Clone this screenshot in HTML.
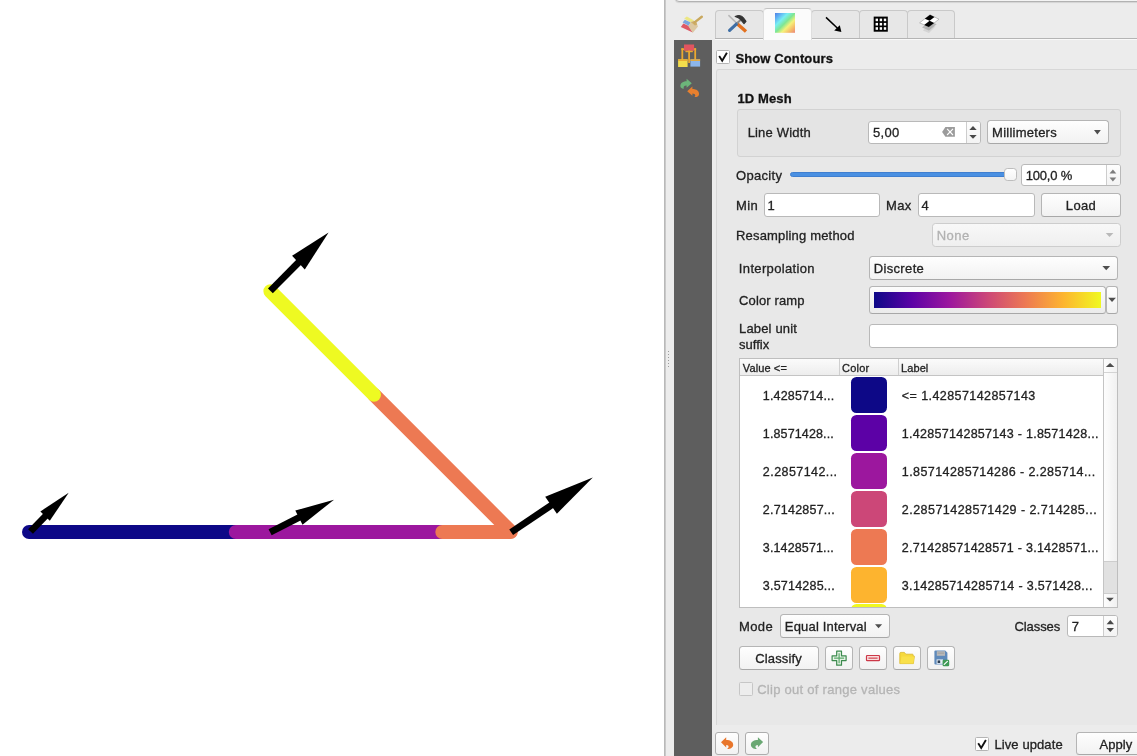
<!DOCTYPE html>
<html lang="en">
<head>
<meta charset="utf-8">
<title>Mesh Layer Styling</title>
<style>
*{box-sizing:border-box;margin:0;padding:0}
html,body{width:1137px;height:756px;overflow:hidden;background:#ececec}
body{position:relative;font-family:"Liberation Sans",sans-serif;font-size:13px;color:#222}
.abs,.t,.tab,.gb,.inp,.btn,.cb,.sw,svg.i{position:absolute}
.t{white-space:nowrap;line-height:16px;height:16px;-webkit-text-stroke:0.3px currentColor}
#canvas{left:0;top:0;width:664px;height:756px;background:#fff}
#split{left:664px;top:0;width:2px;height:756px;background:linear-gradient(90deg,#b9b9b9 0,#b9b9b9 55%,#dedede 100%)}
#side{left:674px;top:40px;width:38px;height:716px;background:#5e5e5e}
#topline{left:674.5px;top:-20px;width:480px;height:21.9px;background:#f4f4f4;border:1px solid #b2b2b2;border-radius:4px;box-shadow:0 0.5px 1px rgba(0,0,0,.10)}
.tab{top:10px;height:29px;background:#e7e7e7;border:1px solid #c9c9c9;border-bottom:none;border-radius:4px 4px 0 0}
.tab.on{top:8px;height:32px;background:#fbfbfb;border-color:#c3c3c3 #dedede #dedede #dedede;z-index:2}
#tabline{left:715px;top:37.9px;width:422px;height:2.3px;background:linear-gradient(#b4b4b4 0,#b4b4b4 42%,#f9f9f9 44%,#f9f9f9 100%)}
.gb{background:#e8e8e8;border:1px solid #d7d7d7;border-radius:3px}
.inp{background:#fff;border:1px solid #b9b9b9;border-radius:3px}
.btn{background:linear-gradient(#fefefe,#f2f2f2);border:1px solid #b5b5b5;border-bottom-color:#a8a8a8;border-radius:3.5px}
.btn.off{background:linear-gradient(#f8f8f8,#efefef);border-color:#cdcdcd}
.cb{background:#fff;border:1px solid #b4b4b4;border-radius:1.5px}
.sw{left:851px;width:36px;height:36px;border-radius:5.5px}
.div{position:absolute;width:1px;background:#cdcdcd}
</style>
</head>
<body>
<!-- MAP CANVAS -->
<div id="canvas" class="abs">
<svg width="664" height="756" viewBox="0 0 664 756">
  <g fill="none" stroke-linecap="round" stroke-width="14">
    <line x1="29" y1="532" x2="235.8" y2="532" stroke="#0d0887"/>
    <line x1="235.8" y1="532" x2="442.3" y2="532" stroke="#9c179e"/>
    <line x1="442.3" y1="532" x2="510.7" y2="532" stroke="#ed7953"/>
    <line x1="510.7" y1="531.5" x2="374" y2="394.8" stroke="#ed7953"/>
    <line x1="374" y1="394.8" x2="270.4" y2="291.2" stroke="#eefa22"/>
  </g>
  <g fill="#000" stroke="#000" stroke-width="6.8">
    <line x1="30.5" y1="531.5" x2="46" y2="515.5"/>
    <polygon points="68.7,492.7 40.4,511.4 49.8,520.8" stroke="none"/>
    <line x1="270.1" y1="532.2" x2="300" y2="517"/>
    <polygon points="334,499.7 295.3,510.6 302.5,524.7" stroke="none"/>
    <line x1="270.4" y1="290.9" x2="299" y2="262"/>
    <polygon points="328.6,232.4 292.1,255.7 304.8,269.5" stroke="none"/>
    <line x1="511.2" y1="532.2" x2="552" y2="504.8"/>
    <polygon points="592.8,477.5 545.2,496.7 556.9,513.7" stroke="none"/>
  </g>
</svg>
</div>
<div id="split" class="abs"></div>
<div id="side" class="abs"></div>
<div id="topline" class="abs"></div>

<!-- TABS -->
<div id="tabline" class="abs" style="z-index:1"></div>
<div class="tab" style="left:715px;width:49px"></div>
<div class="tab" style="left:811px;width:49px"></div>
<div class="tab" style="left:859px;width:49px"></div>
<div class="tab" style="left:907px;width:48px"></div>
<div class="tab on" style="left:763px;width:49px"></div>

<!-- PANEL BOXES -->
<div class="gb" style="left:716px;top:69px;width:440px;height:656px;border-radius:3px 0 0 0;border-bottom:none"></div>
<div class="gb" style="left:737px;top:109px;width:384px;height:48px;background:#e4e4e4;border-color:#d2d2d2"></div>
<div class="cb" style="left:716px;top:50px;width:14px;height:14px"></div>

<!-- line width spin + unit combo -->
<div class="inp" style="left:868px;top:121px;width:113px;height:23px"></div>
<div class="abs" style="left:967px;top:122px;width:13px;height:21px;background:linear-gradient(#fdfdfd,#f3f3f3);border-radius:0 2px 2px 0"></div>
<div class="div" style="left:966px;top:122px;height:21px"></div>
<div class="btn" style="left:987px;top:120px;width:122px;height:24px"></div>
<!-- opacity -->
<div class="abs" style="left:790px;top:172px;width:222px;height:5px;border-radius:2.5px;background:#4a90e2;border:1px solid #3f7fd0"></div>
<div class="abs" style="left:1004px;top:168px;width:13px;height:13px;border-radius:3.5px;background:linear-gradient(#fff,#f4f4f4);border:1px solid #bdbdbd"></div>
<div class="inp" style="left:1021px;top:164px;width:100px;height:22px"></div>
<div class="abs" style="left:1107px;top:165px;width:13px;height:20px;background:linear-gradient(#fdfdfd,#f3f3f3);border-radius:0 2px 2px 0"></div>
<div class="div" style="left:1106px;top:165px;height:20px"></div>
<!-- min / max / load -->
<div class="inp" style="left:764px;top:193px;width:116px;height:24px"></div>
<div class="inp" style="left:918px;top:193px;width:117px;height:24px"></div>
<div class="btn" style="left:1041px;top:193px;width:80px;height:24px"></div>
<!-- resampling (disabled) -->
<div class="btn off" style="left:932px;top:223px;width:189px;height:24px"></div>
<!-- interpolation -->
<div class="btn" style="left:869px;top:256px;width:249px;height:24px"></div>
<!-- color ramp -->
<div class="btn" style="left:869px;top:286px;width:237px;height:28px;background:linear-gradient(#fcfcfc,#ebebeb)"></div>
<div class="abs" style="left:874px;top:292px;width:227px;height:16px;background:linear-gradient(90deg,#0d0887 0%,#5c01a6 16.7%,#9c179e 33.3%,#cc4778 50%,#ed7953 66.7%,#fdb42f 83.3%,#f0f921 100%)"></div>
<div class="btn" style="left:1106px;top:286px;width:12px;height:28px;border-radius:3px"></div>
<!-- label unit suffix -->
<div class="inp" style="left:869px;top:324px;width:249px;height:24px"></div>

<!-- TABLE -->
<div class="abs" style="left:739px;top:358px;width:379px;height:250px;background:#fff;border:1px solid #bebebe;overflow:hidden">
  <div class="abs" style="left:0;top:0;width:364px;height:17px;background:linear-gradient(#fbfbfb,#ededed);border-bottom:1px solid #c4c4c4"></div>
  <div class="div" style="left:99px;top:0;height:16px;background:#cfcfcf"></div>
  <div class="div" style="left:158px;top:0;height:16px;background:#cfcfcf"></div>
  <div class="abs" style="left:363px;top:0;width:15px;height:248px;background:linear-gradient(90deg,#fdfdfd,#f0f0f0);border-left:1px solid #c4c4c4"></div>
  <div class="abs" style="left:364px;top:13px;width:14px;height:1px;background:#d3d3d3"></div>
  <div class="abs" style="left:364px;top:202px;width:14px;height:33px;background:#e1e1e1;border-top:1px solid #cdcdcd;border-bottom:1px solid #cdcdcd"></div>
</div>
<div class="sw" style="top:377px;background:#0d0887"></div>
<div class="sw" style="top:415px;background:#5c01a6"></div>
<div class="sw" style="top:453px;background:#9c179e"></div>
<div class="sw" style="top:491px;background:#cc4778"></div>
<div class="sw" style="top:529px;background:#ed7953"></div>
<div class="sw" style="top:567px;background:#fdb42f"></div>
<div class="abs" style="left:851px;top:604px;width:36px;height:3px;overflow:hidden"><div class="sw" style="left:0;top:0;background:#f0f921"></div></div>

<!-- mode / classes -->
<div class="btn" style="left:780px;top:614px;width:110px;height:24px"></div>
<div class="inp" style="left:1067px;top:615px;width:51px;height:22px"></div>
<div class="abs" style="left:1104px;top:616px;width:13px;height:20px;background:linear-gradient(#fdfdfd,#f3f3f3);border-radius:0 2px 2px 0"></div>
<div class="div" style="left:1103px;top:616px;height:20px"></div>
<!-- buttons row -->
<div class="btn" style="left:739px;top:646px;width:80px;height:24px"></div>
<div class="btn" style="left:825px;top:646px;width:28px;height:24px"></div>
<div class="btn" style="left:859px;top:646px;width:28px;height:24px"></div>
<div class="btn" style="left:893px;top:646px;width:28px;height:24px"></div>
<div class="btn" style="left:927px;top:646px;width:28px;height:24px"></div>
<div class="cb" style="left:739px;top:682px;width:14px;height:14px;background:#ededed;border-color:#c6c6c6"></div>
<!-- bottom bar -->
<div class="btn" style="left:715px;top:732px;width:24px;height:23px;border-color:#adadad;border-radius:3px"></div>
<div class="btn" style="left:745px;top:732px;width:24px;height:23px;border-color:#adadad;border-radius:3px"></div>
<div class="cb" style="left:975px;top:737px;width:14px;height:14px"></div>
<div class="btn" style="left:1076px;top:732px;width:80px;height:23px"></div>
<svg class="i" style="left:0;top:0;z-index:5" width="1137" height="756" viewBox="0 0 1137 756">
<defs>
  <linearGradient id="rb" x1="0" y1="0" x2="1" y2="1">
    <stop offset="0" stop-color="#5080e4"/><stop offset="0.17" stop-color="#62b4f4"/><stop offset="0.33" stop-color="#78eef2"/>
    <stop offset="0.5" stop-color="#7ee694"/><stop offset="0.66" stop-color="#f4f27a"/><stop offset="0.84" stop-color="#f6b868"/><stop offset="1" stop-color="#ea887c"/>
  </linearGradient>
</defs>
<!-- splitter dots -->
<g fill="#9c9c9c"><rect x="668" y="351" width="1" height="1"/><rect x="668" y="354" width="1" height="1"/><rect x="668" y="357" width="1" height="1"/><rect x="668" y="360" width="1" height="1"/><rect x="668" y="363" width="1" height="1"/><rect x="668" y="366" width="1" height="1"/></g>

<!-- paintbrush (symbology) icon -->
<g id="ic-brush">
  <polygon points="684.2,18.6 686.8,16.6 694.2,20.6 690.4,22.6" fill="#ece66a" opacity="0.8"/>
  <polygon points="682.6,22.6 684.8,19.8 690.8,22.4 688.6,25.8" fill="#7aa6de"/>
  <polygon points="680.8,27 683.4,23.4 688.8,26 692.8,32.6" fill="#de5a66"/>
  <polygon points="688.4,26.2 690.8,22 695.6,20.8 698,26.6 692.8,32.8" fill="#dcc8a2"/>
  <polygon points="690.8,22 695.6,20.8 697.2,24.6 695,25.6" fill="#cfae68"/>
  <line x1="694.6" y1="22.4" x2="701.8" y2="16.8" stroke="#c9a85e" stroke-width="2.4" stroke-linecap="round"/>
</g>

<!-- tools icon -->
<g id="ic-tools" stroke-linecap="round">
  <line x1="728.9" y1="15.6" x2="736.4" y2="22.8" stroke="#b9b9b9" stroke-width="1.6"/>
  <line x1="736.6" y1="23.2" x2="746" y2="31.6" stroke="#e2701e" stroke-width="3.4" stroke-linecap="butt"/>
  <line x1="729.6" y1="30.4" x2="736.6" y2="23.8" stroke="#3f6fa6" stroke-width="3.2"/>
  <line x1="737.5" y1="22.8" x2="741.5" y2="19.2" stroke="#8c8c8c" stroke-width="2"/>
  <path d="M735.2,16.6 C738.6,14.8 741.8,15.6 743.6,18 L746,21.4 L744,23.6 L740,19 C738.6,17.6 737,17.2 735.2,16.6 Z" fill="#333" stroke="#333" stroke-width="1.1" stroke-linejoin="round"/>
</g>

<!-- rainbow icon -->
<rect x="775" y="13" width="20" height="19.8" fill="url(#rb)"/>

<!-- arrow icon -->
<line x1="826" y1="17.4" x2="837.5" y2="28.3" stroke="#000" stroke-width="1.5"/>
<polygon points="841.4,32.1 834.2,30.6 839.8,25.2" fill="#000"/>

<!-- grid icon -->
<rect x="873.7" y="16.6" width="14.1" height="15.1" fill="#000"/>
<g fill="#fff">
  <rect x="875.6" y="18.6" width="2.4" height="2.6"/><rect x="879.7" y="18.6" width="2.4" height="2.6"/><rect x="883.8" y="18.6" width="2.4" height="2.6"/>
  <rect x="875.6" y="22.9" width="2.4" height="2.6"/><rect x="879.7" y="22.9" width="2.4" height="2.6"/><rect x="883.8" y="22.9" width="2.4" height="2.6"/>
  <rect x="875.6" y="27.2" width="2.4" height="2.6"/><rect x="879.7" y="27.2" width="2.4" height="2.6"/><rect x="883.8" y="27.2" width="2.4" height="2.6"/>
</g>

<!-- layers icon -->
<g id="ic-layers">
  <polygon points="929.6,24 935.4,26.6 929,33 923,30.4" fill="#c4c4c4" opacity="0.55"/>
  <polygon points="929.6,21 936.6,24.2 929,30.6 922,27.6" fill="#9a9a9a" opacity="0.6"/>
  <polygon points="930,14.8 939,19.2 928.8,27 919.6,22.8" fill="#fff" stroke="#888" stroke-width="0.5"/>
  <polygon points="930,14.8 934.5,17 929.6,20.8 924.8,18.8" fill="#000"/>
  <polygon points="929.6,20.8 934.2,23 928.8,27 924.2,24.9" fill="#000"/>
</g>

<!-- sidebar icon 1: style tree -->
<g id="ic-tree">
  <g stroke="#eaa830" stroke-width="1.8" fill="none">
    <line x1="682.3" y1="48.2" x2="682.3" y2="60"/><line x1="689.1" y1="50" x2="689.1" y2="63"/><line x1="695.2" y1="48.2" x2="695.2" y2="60"/>
    <line x1="681.4" y1="49.2" x2="696.1" y2="49.2"/>
  </g>
  <rect x="684" y="44.5" width="10.1" height="6.2" fill="#e2555f"/>
  <rect x="685.4" y="50.7" width="7.4" height="1.5" fill="#eaa830"/>
  <rect x="678.1" y="59.3" width="9.5" height="7.7" fill="#f4de4c"/>
  <rect x="678.1" y="59.3" width="9.5" height="1.6" fill="#eaa830"/>
  <rect x="690.4" y="59.3" width="9.7" height="7.3" fill="#8cb6ec"/>
  <rect x="690.4" y="59.3" width="9.7" height="1.6" fill="#eaa830"/>
</g>


<!-- sidebar icon 2: history arrows -->
<g id="ic-hist">
  <path d="M691.8,83.2 L686.6,78.8 L686.6,81.2 C682.5,81.2 680,83.6 680.4,86.6 C680.8,88.4 682.6,89 684,88.6 C683,87 684,85.4 686.6,85.4 L686.6,87.8 Z" fill="#6cb57a"/>
  <path d="M687.2,91.2 L692.4,86.6 L692.4,89 C696.6,89 699.4,91.2 699,94.4 C698.6,96.6 696.4,97.4 694.4,97 C696,95.6 695.4,93.6 692.4,93.4 L692.4,95.8 Z" fill="#e8802e"/>
</g>

<!-- checkmarks -->
<g fill="none" stroke="#111" stroke-width="1.9" stroke-linecap="butt" stroke-linejoin="miter">
  <polyline points="719.2,56.1 722.2,60.7 726.9,52.8"/>
  <polyline points="978.2,743.3 981.2,747.9 985.9,740"/>
</g>

<!-- clear icon in spin box -->
<polygon points="942.1,132 945.4,127.1 954.9,127.1 954.9,136.7 945.4,136.7" fill="#9b9b9b"/>
<g stroke="#fff" stroke-width="1.1"><line x1="947.1" y1="128.9" x2="953" y2="135"/><line x1="953" y1="128.9" x2="947.1" y2="135"/></g>

<!-- spin arrows -->
<g fill="#484848">
  <polygon points="969.3,130 976.7,130 973,126.1"/><polygon points="969.3,135 976.7,135 973,138.8"/>
  <polygon points="1106.6,624.2 1114,624.2 1110.3,620"/><polygon points="1106.6,628 1114,628 1110.3,632"/>
</g>
<g fill="#7d7d7d">
  <polygon points="1109.5,173.4 1116.3,173.4 1112.9,169.4"/><polygon points="1109.5,177.4 1116.3,177.4 1112.9,181.4"/>
</g>
<!-- combo arrows -->
<g fill="#4e4e4e">
  <polygon points="1094,130.1 1100.8,130.1 1097.4,134.4"/>
  <polygon points="1102.4,265.9 1110.1,265.9 1106.25,270.2"/>
  <polygon points="1108.2,297.8 1115.9,297.8 1112.05,302.1"/>
  <polygon points="875,624.2 882.1,624.2 878.55,628.2"/>
  <polygon points="1105.8,367 1114.4,367 1110.1,363.1"/>
  <polygon points="1106.2,597.7 1113.8,597.7 1110,601.6"/>
</g>
<polygon points="1105.7,233 1113.4,233 1109.55,237" fill="#b9b9b9"/>

<!-- + icon -->
<path d="M836.7,651.2 h4.8 v4.6 h4.6 v4.8 h-4.6 v4.6 h-4.8 v-4.6 h-4.6 v-4.8 h4.6 Z" fill="#e6f4e6" stroke="#3c8a4e" stroke-width="1.2" stroke-linejoin="round"/>
<path d="M838.5,653.2 h1.2 v4.4 h4.4 v1.2 h-4.4 v4.4 h-1.2 v-4.4 h-4.4 v-1.2 h4.4 Z" fill="#5aa86a"/>
<!-- - icon -->
<rect x="866.5" y="655.5" width="13" height="5.2" rx="0.8" fill="#f9dede" stroke="#cc3848" stroke-width="1.2"/>
<rect x="868.4" y="657.5" width="9.2" height="1.3" fill="#d8505c"/>
<!-- folder icon -->
<path d="M899.8,663.6 L899.8,653.4 Q899.8,652.4 900.8,652.4 L904.4,652.4 L905.8,654.2 L912.4,654.2 Q913.2,654.2 913.2,655 L913.2,656.2 L914.4,656.2 L913.4,663.6 Z" fill="#f6d93c" stroke="#d9b72c" stroke-width="0.8" stroke-linejoin="round"/>
<path d="M900.2,663.4 L901.6,656.4 L914.3,656.4 L913.3,663.4 Z" fill="#f9e04a"/>
<!-- save icon -->
<path d="M935.4,650.6 h9.8 l2.2,2.2 v10.8 q0,1 -1,1 h-11 q-1,0 -1,-1 v-12 q0,-1 1,-1 Z" fill="#5f8abb"/>
<rect x="936.8" y="651.2" width="8.2" height="4.6" fill="#b9b9b9"/>
<rect x="937.6" y="652.6" width="6.6" height="1" fill="#9e9e9e"/>
<rect x="936.6" y="659.4" width="6.4" height="4.4" fill="#e8eef5"/>
<rect x="937.6" y="660.4" width="2.6" height="2.6" fill="#2c3e55"/>
<rect x="942.6" y="659.8" width="6.6" height="6.4" rx="1.2" fill="#3f9a56"/>
<line x1="944.2" y1="664.4" x2="947.4" y2="661.4" stroke="#fff" stroke-width="1.2" stroke-linecap="round"/>

<!-- undo / redo -->
<path d="M721,742.3 L726.2,737.3 L726.2,740 C730.6,740 733.4,742 733.2,745 C733,747.6 730.2,749.2 727,749 C729,748 729.6,745.2 726.2,745 L726.2,747.4 Z" fill="#e8762c"/>
<path d="M763.1,742.1 L757.9,737.3 L757.9,740 C753.5,740 750.7,742 750.9,745 C751.1,747.6 753.9,749.2 757.1,749 C755.1,748 754.5,745.2 757.9,745 L757.9,747.2 Z" fill="#6aa873"/>
</svg>


<!-- TEXT -->
<div id="txt" style="position:absolute;left:0;top:0;width:1137px;height:756px;will-change:transform;z-index:6">
<div class="t" id="t1" style="left:735.43px;top:51.10px;font-size:13px;color:#111;letter-spacing:0.118px;font-weight:bold">Show Contours</div>
<div class="t" id="t2" style="left:737.43px;top:91.20px;font-size:13px;color:#111;letter-spacing:0.119px;font-weight:bold">1D Mesh</div>
<div class="t" id="t3" style="left:747.67px;top:125.00px;font-size:13px;color:#222;letter-spacing:0.174px">Line Width</div>
<div class="t" id="t4" style="left:873.05px;top:125.30px;font-size:13px;color:#222;letter-spacing:0.289px">5,00</div>
<div class="t" id="t5" style="left:992.05px;top:125.10px;font-size:13px;color:#222;letter-spacing:0.254px">Millimeters</div>
<div class="t" id="t6" style="left:736.05px;top:168.10px;font-size:13px;color:#222;letter-spacing:0.295px">Opacity</div>
<div class="t" id="t7" style="left:1025.67px;top:168.30px;font-size:13px;color:#222;letter-spacing:-0.182px">100,0 %</div>
<div class="t" id="t8" style="left:736.05px;top:198.40px;font-size:13px;color:#222;letter-spacing:0.398px">Min</div>
<div class="t" id="t9" style="left:767.43px;top:198.40px;font-size:13px;color:#222">1</div>
<div class="t" id="t10" style="left:886.05px;top:198.40px;font-size:13px;color:#222;letter-spacing:0.309px">Max</div>
<div class="t" id="t11" style="left:921.62px;top:198.40px;font-size:13px;color:#222">4</div>
<div class="t" id="t12" style="left:1065.86px;top:198.30px;font-size:13px;color:#222;letter-spacing:0.339px">Load</div>
<div class="t" id="t13" style="left:736.05px;top:228.10px;font-size:13px;color:#222;letter-spacing:0.172px">Resampling method</div>
<div class="t" id="t14" style="left:936.67px;top:228.10px;font-size:13px;color:#b1b1b1;letter-spacing:0.494px">None</div>
<div class="t" id="t15" style="left:738.86px;top:260.80px;font-size:13px;color:#222;letter-spacing:0.348px">Interpolation</div>
<div class="t" id="t16" style="left:873.67px;top:260.80px;font-size:13px;color:#222;letter-spacing:0.356px">Discrete</div>
<div class="t" id="t17" style="left:739.05px;top:293.30px;font-size:13px;color:#222;letter-spacing:0.125px">Color ramp</div>
<div class="t" id="t18" style="left:739.05px;top:321.00px;font-size:13px;color:#222;letter-spacing:0.162px">Label unit</div>
<div class="t" id="t19" style="left:739.05px;top:336.80px;font-size:13px;color:#222">suffix</div>
<div class="t" id="h1" style="left:742.76px;top:359.89px;font-size:11px;color:#222;letter-spacing:0.122px">Value &lt;=</div>
<div class="t" id="h2" style="left:842.05px;top:359.89px;font-size:11px;color:#222;letter-spacing:0.234px">Color</div>
<div class="t" id="h3" style="left:901.05px;top:359.89px;font-size:11px;color:#222;letter-spacing:0.078px">Label</div>
<div class="t" id="v0" style="left:762.86px;top:388.07px;font-size:12.5px;color:#222;letter-spacing:0.169px">1.4285714...</div>
<div class="t" id="l0" style="left:901.86px;top:388.07px;font-size:12.5px;color:#222;letter-spacing:0.422px">&lt;= 1.42857142857143</div>
<div class="t" id="v1" style="left:762.86px;top:426.07px;font-size:12.5px;color:#222;letter-spacing:0.129px">1.8571428...</div>
<div class="t" id="l1" style="left:901.86px;top:426.07px;font-size:12.5px;color:#222;letter-spacing:0.273px">1.42857142857143 - 1.8571428...</div>
<div class="t" id="v2" style="left:762.86px;top:464.07px;font-size:12.5px;color:#222;letter-spacing:0.424px">2.2857142...</div>
<div class="t" id="l2" style="left:901.86px;top:464.07px;font-size:12.5px;color:#222;letter-spacing:0.410px">1.85714285714286 - 2.285714...</div>
<div class="t" id="v3" style="left:762.86px;top:502.07px;font-size:12.5px;color:#222;letter-spacing:0.208px">2.7142857...</div>
<div class="t" id="l3" style="left:901.86px;top:502.07px;font-size:12.5px;color:#222;letter-spacing:0.460px">2.28571428571429 - 2.714285...</div>
<div class="t" id="v4" style="left:762.86px;top:540.07px;font-size:12.5px;color:#222;letter-spacing:0.129px">3.1428571...</div>
<div class="t" id="l4" style="left:901.86px;top:540.07px;font-size:12.5px;color:#222;letter-spacing:0.273px">2.71428571428571 - 3.1428571...</div>
<div class="t" id="v5" style="left:762.86px;top:578.07px;font-size:12.5px;color:#222;letter-spacing:0.208px">3.5714285...</div>
<div class="t" id="l5" style="left:901.86px;top:578.07px;font-size:12.5px;color:#222;letter-spacing:0.313px">3.14285714285714 - 3.571428...</div>
<div class="t" id="t21" style="left:739.05px;top:619.30px;font-size:13px;color:#222;letter-spacing:0.360px">Mode</div>
<div class="t" id="t22" style="left:784.86px;top:619.30px;font-size:13px;color:#222;letter-spacing:0.173px">Equal Interval</div>
<div class="t" id="t23" style="left:1014.43px;top:618.90px;font-size:13px;color:#222;letter-spacing:-0.067px">Classes</div>
<div class="t" id="t24" style="left:1071.86px;top:618.90px;font-size:13px;color:#222">7</div>
<div class="t" id="t25" style="left:755.24px;top:651.40px;font-size:13px;color:#222;letter-spacing:0.144px">Classify</div>
<div class="t" id="t26" style="left:757.15px;top:681.80px;font-size:13px;color:#b4b4b4;letter-spacing:0.276px">Clip out of range values</div>
<div class="t" id="t27" style="left:994.43px;top:736.90px;font-size:13px;color:#222;letter-spacing:0.100px">Live update</div>
<div class="t" id="t28" style="left:1099.43px;top:736.90px;font-size:13px;color:#222;letter-spacing:0.080px">Apply</div>
</div>
</body>
</html>
